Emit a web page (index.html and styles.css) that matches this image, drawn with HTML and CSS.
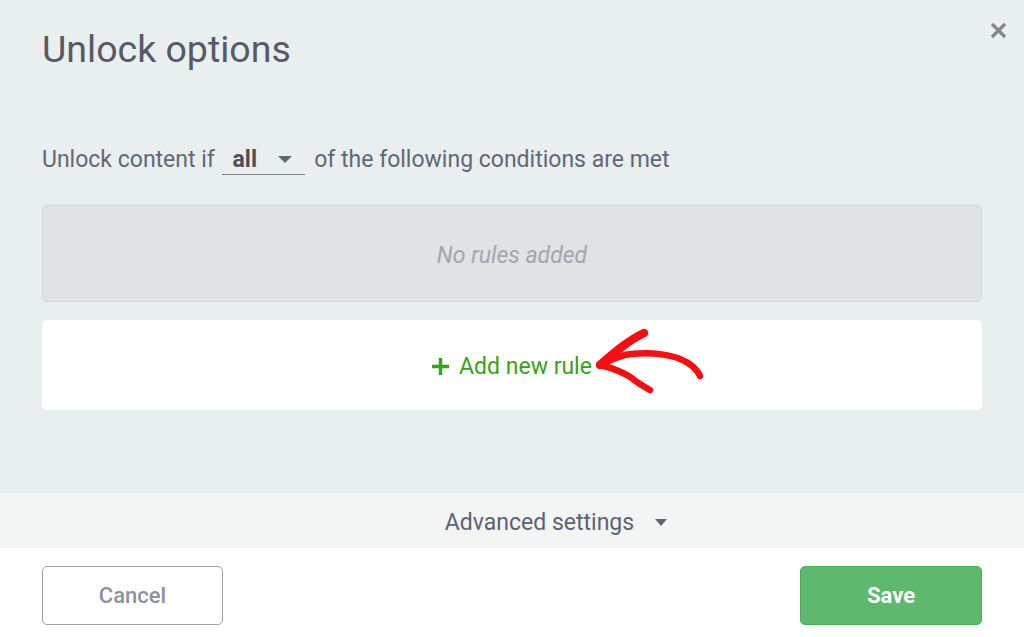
FILE: index.html
```html
<!DOCTYPE html>
<html lang="en">
<head>
    <meta charset="UTF-8">
    <meta name="viewport" content="width=device-width, initial-scale=1.0">
    <title>Unlock options</title>
    <link rel="stylesheet" href="styles.css">
</head>
<body>
    <div class="modal">
        <button class="close" aria-label="Close">
            <svg width="17" height="17" viewBox="0 0 17 17">
                <path d="M2 2 L15 15 M15 2 L2 15" stroke="#85878a" stroke-width="3.2" fill="none"/>
            </svg>
        </button>

        <div class="modal-body">
            <h1 class="title">Unlock options</h1>

            <p class="condition">
                Unlock content if
                <span class="select">all <span class="caret"></span></span>
                of the following conditions are met
            </p>

            <div class="rules-empty">No rules added</div>

            <div class="add-rule">
                <span class="add-label">
                    <svg class="plus" width="17" height="17" viewBox="0 0 17 17">
                        <path d="M8.5 0 V17 M0 8.5 H17" stroke="#3ba01c" stroke-width="3.4" fill="none"/>
                    </svg>
                    Add new rule
                    <!-- hand drawn pointer -->
                    <svg class="pointer" width="112" height="70" viewBox="0 0 112 70">
                        <path d="M6 37 C 15 33, 25 27, 37 26 C 57 24, 80 26, 94 35 C 100 39, 104 43, 106 48"
                              stroke="#f80d12" stroke-width="6.5" fill="none" stroke-linecap="round"/>
                        <path d="M50 5 C 35 12, 21 24, 6 37"
                              stroke="#f80d12" stroke-width="8.5" fill="none" stroke-linecap="round"/>
                        <path d="M6 37 C 19 40, 33 46, 39 51 C 45 56, 51 59, 56 62"
                              stroke="#f80d12" stroke-width="6.5" fill="none" stroke-linecap="round"/>
                    </svg>
                </span>
            </div>
        </div>

        <div class="advanced">
            Advanced settings <span class="caret"></span>
        </div>

        <div class="footer">
            <button class="btn btn-cancel">Cancel</button>
            <button class="btn btn-save">Save</button>
        </div>
    </div>
</body>
</html>
```
FILE: styles.css
```css
body {
    margin: 0;
    font-family: Roboto, 'Liberation Sans', sans-serif;
    background-color: #ffffff;
}
.modal {
    position: relative;
    width: 1024px;
    height: 637px;
    display: flex;
    flex-direction: column;
    overflow: hidden;
}
.close {
    position: absolute;
    top: 22px;
    right: 17px;
    padding: 0;
    border: none;
    background: none;
    line-height: 0;
    cursor: pointer;
}
.modal-body {
    background-color: #e9eeef;
    padding: 27px 42px 83px;
}
.title {
    margin: 0;
    font-size: 37.5px;
    font-weight: 400;
    line-height: 45px;
    color: #555a66;
}
.condition {
    margin: 72px 0 0;
    font-size: 23px;
    line-height: 32px;
    color: #5f6975;
}
.select {
    display: inline-block;
    width: 83px;
    box-sizing: border-box;
    margin: 0 4px 0 1px;
    padding: 0 0 0 11px;
    line-height: 28px;
    border-bottom: 1.5px solid #7b838f;
    font-weight: 700;
    color: #4b505c;
}
.select .caret {
    margin-left: 15px;
}
.caret {
    display: inline-block;
    width: 0;
    height: 0;
    border-left: 7px solid transparent;
    border-right: 7px solid transparent;
    border-top: 7px solid #5f6672;
    vertical-align: 4px;
}
.rules-empty {
    margin-top: 29px;
    height: 95px;
    line-height: 99px;
    text-align: center;
    background-color: #dfe3e4;
    border: 1px solid #d4d8da;
    border-radius: 5px;
    font-size: 23px;
    font-style: italic;
    color: #a2a7ad;
}
.add-rule {
    margin-top: 18px;
    height: 90px;
    display: flex;
    align-items: center;
    justify-content: center;
    background-color: #ffffff;
    border-radius: 5px;
}
.add-label {
    position: relative;
    display: flex;
    align-items: center;
    gap: 10px;
    padding-top: 3px;
    font-size: 23px;
    line-height: 32px;
    color: #3ba01c;
}
.plus {
    margin-top: -1px;
}
.pointer {
    position: absolute;
    left: 100%;
    top: -20px;
    margin-left: 2px;
}
.advanced {
    height: 52px;
    display: flex;
    align-items: center;
    justify-content: center;
    gap: 21px;
    padding: 3px 0 0 88px;
    background-color: #f3f5f5;
    font-size: 23px;
    color: #5c6370;
}
.advanced .caret {
    border-left-width: 6px;
    border-right-width: 6px;
    border-top-width: 7px;
    vertical-align: 0;
}
.footer {
    flex: 1;
    display: flex;
    justify-content: space-between;
    align-items: flex-start;
    padding: 18px 42px 0;
    background-color: #ffffff;
}
.btn {
    width: 182px;
    height: 59px;
    border-radius: 5px;
    font-family: Roboto, 'Liberation Sans', sans-serif;
    font-size: 22px;
    font-weight: 500;
    cursor: pointer;
}
.btn-cancel {
    width: 181px;
    background-color: #ffffff;
    border: 1.5px solid #9ca1aa;
    color: #8c919b;
}
.btn-save {
    background-color: #5cb96d;
    border: 1px solid #4aae5b;
    color: #ffffff;
    font-weight: 700;
}
```
